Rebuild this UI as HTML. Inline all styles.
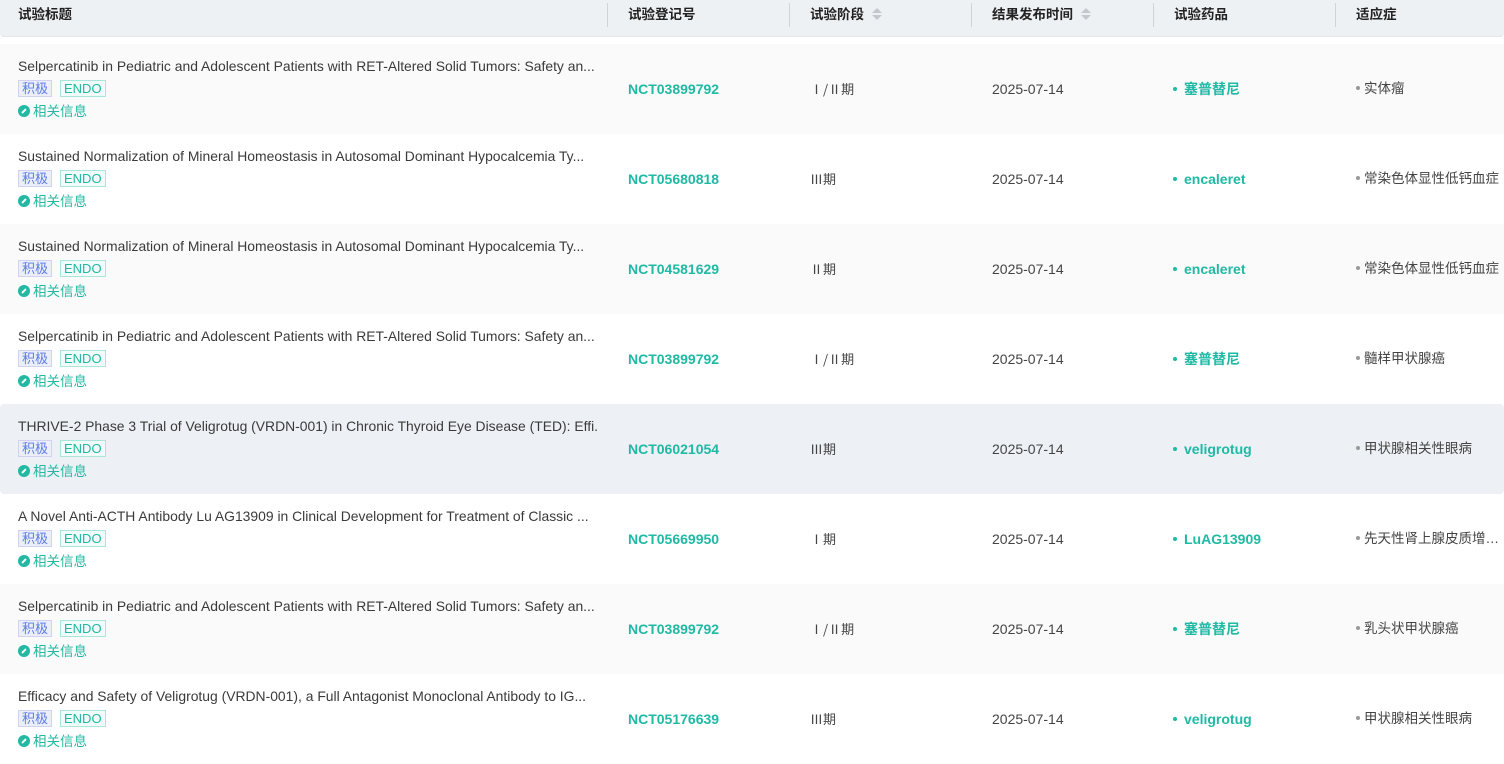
<!DOCTYPE html>
<html><head><meta charset="utf-8"><style>
*{margin:0;padding:0;box-sizing:border-box}
body{width:1504px;height:756px;overflow:hidden;background:#fff;font-family:"Liberation Sans","Noto Sans CJK SC",sans-serif;font-size:14px;color:#333}
.hd{position:absolute;left:0;top:0;width:1504px;height:37px;background:#eef1f4;border-bottom:1px solid #e3e7ec;border-radius:0 0 4px 4px}
.hd div{position:absolute;top:0;line-height:30px;font-weight:bold;color:#222;font-size:13.5px}
.sep{position:absolute;top:3px;width:1px;height:24px;background:#d0d4d9}
.sort{display:inline-block;vertical-align:middle;margin-left:8px;width:10px;height:14px;position:relative;top:-1px}
.sort:before{content:"";position:absolute;left:0;top:1px;border:5px solid transparent;border-top:0;border-bottom:5px solid #c4c8cd}
.sort:after{content:"";position:absolute;left:0;top:8px;border:5px solid transparent;border-bottom:0;border-top:5px solid #c4c8cd}
.row{position:absolute;left:0;width:1504px;height:90px}
.row.g{background:#fafafa}
.row.h{background:#edf0f4;border-radius:4px}
.t{position:absolute;left:18px;top:14px;width:580px;white-space:nowrap;overflow:hidden;color:#3a3a3a;font-size:13.9px;line-height:16px}
.tg{position:absolute;top:36px;height:17px;line-height:15px;font-size:13px;padding:0 3px;border:1px solid}
.a{left:18px;background:#eceefa;border-color:#cfd3f0;color:#5b7be6}
.b{left:60px;background:#f1fbf9;border-color:#a9e5da;color:#22b8a2}
.ri{position:absolute;left:18px;top:60px;color:#22b8a2;font-size:13.5px;line-height:15px}
.ri i{display:inline-block;width:12px;height:12px;border-radius:50%;background:#22b8a2;vertical-align:-1px;margin-right:3px;position:relative}
.ri i:after{content:"";position:absolute;left:3px;top:5px;width:6px;height:2px;background:#fff;transform:rotate(-45deg);border-radius:1px}
.c{position:absolute;top:37px;line-height:16px;font-size:14px}
.n{left:628px;color:#1fb9a4;font-weight:bold}
.p{left:810px;color:#444;font-family:"Noto Sans CJK SC",sans-serif;font-size:13px}
.d{left:992px;color:#444}
.dr{left:1173px;color:#1fb9a4;font-weight:bold}
.dr:before{content:"";display:inline-block;width:4px;height:4px;border-radius:50%;background:#1fb9a4;margin-right:7px;vertical-align:3px}
.in{left:1356px;color:#444;width:148px;white-space:nowrap;overflow:hidden;text-overflow:ellipsis;font-size:13.5px}
.in:before{content:"";display:inline-block;width:4px;height:4px;border-radius:50%;background:#999;margin-right:4px;vertical-align:3px}
</style></head><body>
<div class="hd">
<div style="left:18px">试验标题</div>
<span class="sep" style="left:607px"></span><div style="left:628px">试验登记号</div>
<span class="sep" style="left:789px"></span><div style="left:810px">试验阶段<span class="sort"></span></div>
<span class="sep" style="left:971px"></span><div style="left:992px">结果发布时间<span class="sort"></span></div>
<span class="sep" style="left:1153px"></span><div style="left:1174px">试验药品</div>
<span class="sep" style="left:1335px"></span><div style="left:1356px">适应症</div>
</div>

<div class="row g" style="top:44px"><div class="t">Selpercatinib in Pediatric and Adolescent Patients with RET-Altered Solid Tumors: Safety an...</div><span class="tg a">积极</span><span class="tg b">ENDO</span><div class="ri"><i></i>相关信息</div><div class="c n">NCT03899792</div><div class="c p">Ⅰ/Ⅱ期</div><div class="c d">2025-07-14</div><div class="c dr">塞普替尼</div><div class="c in">实体瘤</div></div>

<div class="row" style="top:134px"><div class="t">Sustained Normalization of Mineral Homeostasis in Autosomal Dominant Hypocalcemia Ty...</div><span class="tg a">积极</span><span class="tg b">ENDO</span><div class="ri"><i></i>相关信息</div><div class="c n">NCT05680818</div><div class="c p">Ⅲ期</div><div class="c d">2025-07-14</div><div class="c dr">encaleret</div><div class="c in">常染色体显性低钙血症</div></div>

<div class="row g" style="top:224px"><div class="t">Sustained Normalization of Mineral Homeostasis in Autosomal Dominant Hypocalcemia Ty...</div><span class="tg a">积极</span><span class="tg b">ENDO</span><div class="ri"><i></i>相关信息</div><div class="c n">NCT04581629</div><div class="c p">Ⅱ期</div><div class="c d">2025-07-14</div><div class="c dr">encaleret</div><div class="c in">常染色体显性低钙血症</div></div>

<div class="row" style="top:314px"><div class="t">Selpercatinib in Pediatric and Adolescent Patients with RET-Altered Solid Tumors: Safety an...</div><span class="tg a">积极</span><span class="tg b">ENDO</span><div class="ri"><i></i>相关信息</div><div class="c n">NCT03899792</div><div class="c p">Ⅰ/Ⅱ期</div><div class="c d">2025-07-14</div><div class="c dr">塞普替尼</div><div class="c in">髓样甲状腺癌</div></div>

<div class="row h" style="top:404px"><div class="t">THRIVE-2 Phase 3 Trial of Veligrotug (VRDN-001) in Chronic Thyroid Eye Disease (TED): Effi...</div><span class="tg a">积极</span><span class="tg b">ENDO</span><div class="ri"><i></i>相关信息</div><div class="c n">NCT06021054</div><div class="c p">Ⅲ期</div><div class="c d">2025-07-14</div><div class="c dr">veligrotug</div><div class="c in">甲状腺相关性眼病</div></div>

<div class="row" style="top:494px"><div class="t">A Novel Anti-ACTH Antibody Lu AG13909 in Clinical Development for Treatment of Classic ...</div><span class="tg a">积极</span><span class="tg b">ENDO</span><div class="ri"><i></i>相关信息</div><div class="c n">NCT05669950</div><div class="c p">Ⅰ期</div><div class="c d">2025-07-14</div><div class="c dr">LuAG13909</div><div class="c in">先天性肾上腺皮质增生症</div></div>

<div class="row g" style="top:584px"><div class="t">Selpercatinib in Pediatric and Adolescent Patients with RET-Altered Solid Tumors: Safety an...</div><span class="tg a">积极</span><span class="tg b">ENDO</span><div class="ri"><i></i>相关信息</div><div class="c n">NCT03899792</div><div class="c p">Ⅰ/Ⅱ期</div><div class="c d">2025-07-14</div><div class="c dr">塞普替尼</div><div class="c in">乳头状甲状腺癌</div></div>

<div class="row" style="top:674px"><div class="t">Efficacy and Safety of Veligrotug (VRDN-001), a Full Antagonist Monoclonal Antibody to IG...</div><span class="tg a">积极</span><span class="tg b">ENDO</span><div class="ri"><i></i>相关信息</div><div class="c n">NCT05176639</div><div class="c p">Ⅲ期</div><div class="c d">2025-07-14</div><div class="c dr">veligrotug</div><div class="c in">甲状腺相关性眼病</div></div>
</body></html>
